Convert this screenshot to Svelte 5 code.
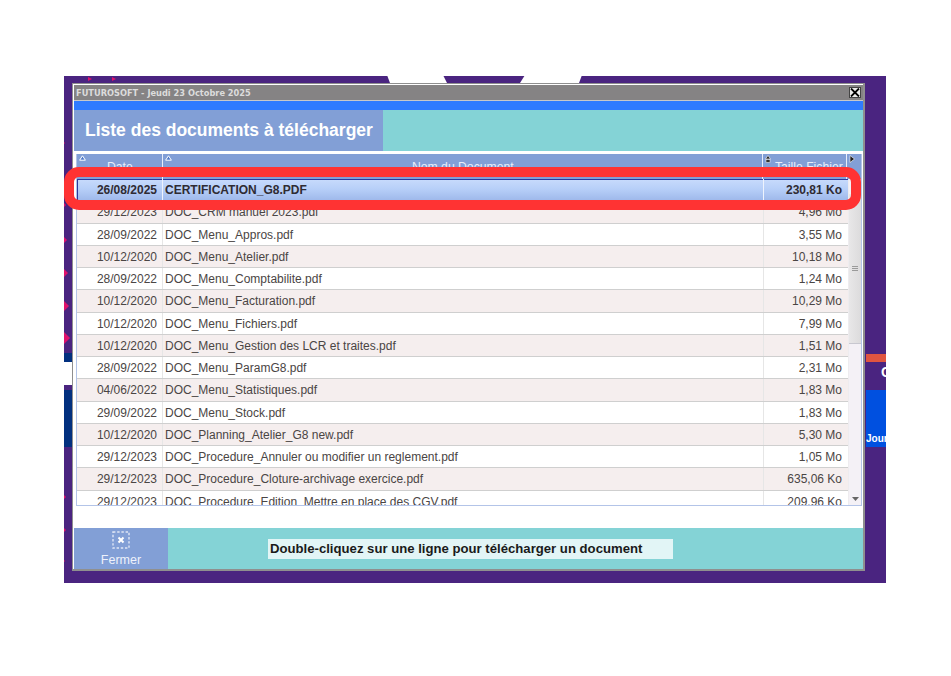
<script>
	const rows = [
		['29/12/2023', 'DOC_CRM manuel 2023.pdf', '4,96 Mo'],
		['28/09/2022', 'DOC_Menu_Appros.pdf', '3,55 Mo'],
		['10/12/2020', 'DOC_Menu_Atelier.pdf', '10,18 Mo'],
		['28/09/2022', 'DOC_Menu_Comptabilite.pdf', '1,24 Mo'],
		['10/12/2020', 'DOC_Menu_Facturation.pdf', '10,29 Mo'],
		['10/12/2020', 'DOC_Menu_Fichiers.pdf', '7,99 Mo'],
		['10/12/2020', 'DOC_Menu_Gestion des LCR et traites.pdf', '1,51 Mo'],
		['28/09/2022', 'DOC_Menu_ParamG8.pdf', '2,31 Mo'],
		['04/06/2022', 'DOC_Menu_Statistiques.pdf', '1,83 Mo'],
		['29/09/2022', 'DOC_Menu_Stock.pdf', '1,83 Mo'],
		['10/12/2020', 'DOC_Planning_Atelier_G8 new.pdf', '5,30 Mo'],
		['29/12/2023', 'DOC_Procedure_Annuler ou modifier un reglement.pdf', '1,05 Mo'],
		['29/12/2023', 'DOC_Procedure_Cloture-archivage exercice.pdf', '635,06 Ko'],
		['29/12/2023', 'DOC_Procedure_Edition_Mettre en place des CGV.pdf', '209,96 Ko']
	];
	// little pink marks on the strip left of the window: [top, half height]
	const pinks = [
		[66, 1], [127, 2], [161, 3], [193, 4], [225, 5], [256, 6], [419, 2], [452, 2], [484, 1]
	];
</script>

<div class="page">
	<div class="desktop">
		<div class="notch n1"></div>
		<div class="notch n2"></div>
		<div class="tick t1"></div>
		<div class="tick t2"></div>
		{#each pinks as p}
			<div class="pink" style="top:{p[0]}px;border-width:{p[1]}px 0 {p[1]}px {p[1]}px"></div>
		{/each}
		<div class="left-navy"></div>
		<div class="left-gap"></div>
		<div class="left-blue"></div>
		<div class="right-red"></div>
		<div class="right-c">C</div>
		<div class="right-blue"><span>Jour</span></div>

		<div class="window">
			<div class="titlebar">
				<span class="title">FUTUROSOFT - Jeudi 23 Octobre 2025</span>
				<button class="close" aria-label="Fermer">
					<svg width="10" height="9" viewBox="0 0 10 9"><path d="M1 0.5 9 8.5M9 0.5 1 8.5" stroke="#000" stroke-width="1.8" fill="none" /></svg>
				</button>
			</div>
			<div class="bluebar"></div>
			<div class="heading">
				<h1>Liste des documents à télécharger</h1>
			</div>
			<div class="list">
				<div class="thead">
					<div class="th h-date">
						<svg class="sort" width="7" height="6" viewBox="0 0 7 6"><path d="M3.5 .8 6.4 5.2H.6Z" fill="#4d78c8" stroke="#fff" /></svg>
						Date
					</div>
					<div class="th h-name">
						<svg class="sort" width="7" height="6" viewBox="0 0 7 6"><path d="M3.5 .8 6.4 5.2H.6Z" fill="#4d78c8" stroke="#fff" /></svg>
						Nom du Document
					</div>
					<div class="th h-size">
						<svg class="sort" width="6" height="8" viewBox="0 0 6 8"><path d="M3 .5 5.5 4H.5Z" fill="#222" stroke="#fff" stroke-width=".6" /><rect x="1" y="4.5" width="4" height="3" fill="#333" stroke="#fff" stroke-width=".5" /></svg>
						Taille Fichier
					</div>
					<div class="th h-end">
						<svg class="sort" width="6" height="8" viewBox="0 0 6 8"><path d="M1 .5 5.5 4 1 7.5Z" fill="#222" stroke="#fff" stroke-width=".6" /></svg>
					</div>
				</div>
				<div class="body">
					<div class="table">
						<div class="tr selected">
							<div class="td c-date">26/08/2025</div>
							<div class="td c-name">CERTIFICATION_G8.PDF</div>
							<div class="td c-size">230,81 Ko</div>
						</div>
						{#each rows as r, i}
							<div class="tr" class:odd={i % 2 === 0}>
								<div class="td c-date">{r[0]}</div>
								<div class="td c-name">{r[1]}</div>
								<div class="td c-size">{r[2]}</div>
							</div>
						{/each}
					</div>
					<div class="scrollbar">
						<div class="thumb"><i></i><i></i><i></i></div>
						<svg class="arrow" width="7" height="4" viewBox="0 0 7 4"><path d="M0 0H7L3.5 4Z" fill="#666" /></svg>
					</div>
				</div>
			</div>
			<div class="spacer"></div>
			<div class="footer">
				<button class="fermer">
					<svg width="18" height="18" viewBox="0 0 18 18">
						<rect x="1" y="1" width="16" height="16" fill="none" stroke="#dfe6f5" stroke-width="1.4" stroke-dasharray="2.4 1.8" />
						<path d="M6.5 6.5 11.5 11.5M11.5 6.5 6.5 11.5" stroke="#fff" stroke-width="2" fill="none" />
					</svg>
					<span>Fermer</span>
				</button>
				<div class="hint">Double-cliquez sur une ligne pour télécharger un document</div>
			</div>
		</div>
		<div class="highlight"></div>
	</div>
</div>

<style>
	:global(body) {
		margin: 0;
		background: #fff;
	}

	.page {
		width: 951px;
		height: 676px;
		padding: 76px 0 0 64px;
		box-sizing: border-box;
		overflow: hidden;
		font-family: 'Liberation Sans', Arial, sans-serif;
	}

	/* backdrop behind the window */
	.desktop {
		position: relative;
		width: 822px;
		height: 507px;
		background: #4a2480;
		padding: 7px 0 0 8px;
		box-sizing: border-box;
	}

	.notch {
		position: absolute;
		top: -1px;
		height: 8px;
		background: #fff;
	}
	.n1 {
		left: 323px;
		width: 60px;
		clip-path: polygon(0 0, 56px 0, 60px 100%, 3px 100%);
	}
	.n2 {
		left: 456px;
		width: 62px;
		clip-path: polygon(5px 0, 62px 0, 59px 100%, 0 100%);
	}
	.tick {
		position: absolute;
		top: 1px;
		width: 0;
		height: 0;
		border-style: solid;
		border-width: 2px 0 2px 4px;
		border-color: transparent transparent transparent #e0106c;
	}
	.t1 {
		left: 24px;
	}
	.t2 {
		left: 48px;
	}
	.pink {
		position: absolute;
		left: 0;
		width: 0;
		height: 0;
		border-style: solid;
		border-color: transparent transparent transparent #e0106c;
	}
	.left-navy {
		position: absolute;
		left: 0;
		top: 277px;
		width: 8px;
		height: 9px;
		background: #02307f;
	}
	.left-gap {
		position: absolute;
		left: 0;
		top: 286px;
		width: 8px;
		height: 23px;
		background: #fff;
	}
	.left-blue {
		position: absolute;
		left: 0;
		top: 314px;
		width: 8px;
		height: 57px;
		background: #02307f;
	}
	.right-red {
		position: absolute;
		right: 0;
		top: 278px;
		width: 20px;
		height: 8px;
		background: #e05540;
	}
	.right-c {
		position: absolute;
		left: 817px;
		top: 287px;
		color: #fff;
		font-size: 14px;
		font-weight: 700;
		line-height: 18px;
	}
	.right-blue {
		position: absolute;
		right: 0;
		top: 314px;
		width: 20px;
		height: 57px;
		background: #0050e0;
		overflow: hidden;
		color: #fff;
		font-size: 10px;
		font-weight: 700;
	}
	.right-blue span {
		display: block;
		padding-top: 43px;
		white-space: nowrap;
	}

	/* window */
	.window {
		position: relative;
		width: 793px;
		height: 488px;
		background: #fff;
		border: 1px solid #8f8f8f;
		border-right-width: 2px;
		border-bottom-width: 2px;
		padding: 1px 0 0 1px;
		box-sizing: border-box;
		display: flex;
		flex-direction: column;
	}

	.titlebar {
		height: 16px;
		background: #858384;
		display: flex;
		align-items: center;
		justify-content: space-between;
		padding: 0 1px 0 2px;
		flex: none;
		border-bottom: 1px solid #c9c9c9;
		box-sizing: border-box;
	}
	.title {
		color: #dcdcdc;
		font-family: 'DejaVu Sans', sans-serif;
		font-size: 8.25px;
		font-weight: 700;
	}
	.close {
		width: 12px;
		height: 11px;
		padding: 0;
		background: #ececec;
		border: 1px solid #444;
		display: grid;
		place-items: center;
		margin-right: 1px;
	}

	.bluebar {
		height: 9px;
		background: #2f7bff;
		flex: none;
	}

	.heading {
		height: 41px;
		flex: none;
		background: #84d3d6;
	}
	h1 {
		margin: 0;
		width: 309px;
		height: 41px;
		box-sizing: border-box;
		padding-left: 11px;
		background: #829fd6;
		color: #fff;
		font-size: 17.5px;
		font-weight: 700;
		line-height: 40px;
		white-space: nowrap;
	}

	.list {
		height: 352px;
		flex: none;
		margin: 3px 1px 0 2px;
		border: 1px solid #b3c4e8;
		border-top: none;
		box-sizing: border-box;
		display: flex;
		flex-direction: column;
	}
	.thead {
		display: flex;
		height: 25px;
		flex: none;
		background: #829fd6;
	}
	.th {
		position: relative;
		box-sizing: border-box;
		color: #e8eefa;
		font-size: 12.2px;
		line-height: 24px;
		padding-top: 1px;
		white-space: nowrap;
		border-right: 1px solid #e8eefa;
	}
	.sort {
		position: absolute;
		left: 2px;
		top: 1px;
	}
	.h-date {
		width: 86px;
		flex: none;
		padding-left: 30px;
	}
	.h-name {
		flex: 1;
		min-width: 0;
		padding-left: 249px;
	}
	.h-size {
		width: 84px;
		flex: none;
		padding-left: 12px;
	}
	.h-end {
		width: 14px;
		flex: none;
		border-right: none;
	}

	.body {
		flex: 1;
		min-height: 0;
		display: flex;
		overflow: hidden;
	}
	.table {
		flex: 1;
		min-width: 0;
		background: #fff;
	}

	.tr {
		display: flex;
		height: 22.25px;
		box-sizing: border-box;
		border-bottom: 1px solid #cfcfcf;
		background: #fff;
		color: #4a4544;
		font-size: 12px;
		line-height: 23px;
	}
	.tr.odd {
		background: #f5eeee;
	}
	.td {
		box-sizing: border-box;
		white-space: nowrap;
		overflow: hidden;
		border-right: 1px solid #e6e6e6;
	}
	.c-date {
		width: 86px;
		flex: none;
		text-align: right;
		padding-right: 5px;
	}
	.c-name {
		flex: 1;
		min-width: 0;
		padding-left: 2px;
	}
	.td.c-size {
		width: 84px;
		flex: none;
		text-align: right;
		padding-right: 6px;
		border-right: none;
	}
	.tr.selected {
		background: linear-gradient(#c8dbfc, #b7cff8 45%, #9db7ea);
		border: none;
		box-shadow: inset 1px 1px 0 #2c3a9e;
		color: #2f2b33;
		font-weight: 700;
		line-height: 22px;
	}
	.selected .td {
		border-right-color: #eef3fd;
	}

	.scrollbar {
		position: relative;
		width: 13px;
		flex: none;
		background: #f4f1f6;
		border-left: 1px solid #eeecef;
		box-sizing: border-box;
	}
	.thumb {
		position: absolute;
		left: 0;
		right: 0;
		top: 15px;
		height: 149px;
		background: linear-gradient(90deg, #e8e7e8, #dcdbdc);
		border-bottom: 1px solid #c8c8d0;
		display: flex;
		flex-direction: column;
		gap: 1px;
		align-items: center;
		justify-content: center;
	}
	.thumb i {
		display: block;
		width: 6px;
		height: 1px;
		background: #9a9a9a;
	}
	.arrow {
		position: absolute;
		left: 3px;
		bottom: 4px;
	}

	.spacer {
		flex: 1;
	}

	.footer {
		height: 41px;
		flex: none;
		background: #84d3d6;
		display: flex;
		align-items: center;
	}
	.fermer {
		width: 94px;
		height: 41px;
		flex: none;
		background: #829fd6;
		border: none;
		padding: 3px 0 0;
		color: #eef2fb;
		font-family: inherit;
		font-size: 12.5px;
		display: flex;
		flex-direction: column;
		align-items: center;
		gap: 4px;
	}
	.hint {
		margin-left: 100px;
		width: 405px;
		height: 20px;
		box-sizing: border-box;
		padding-left: 2px;
		background: #e2f5f6;
		color: #1a1a1a;
		font-size: 13.15px;
		font-weight: 700;
		line-height: 19px;
		white-space: nowrap;
	}

	/* red callout drawn over the screenshot */
	.highlight {
		position: absolute;
		left: 0;
		top: 91px;
		width: 797px;
		height: 43px;
		box-sizing: border-box;
		border: 10px solid #ff3333;
		border-radius: 15px;
		pointer-events: none;
	}
</style>
